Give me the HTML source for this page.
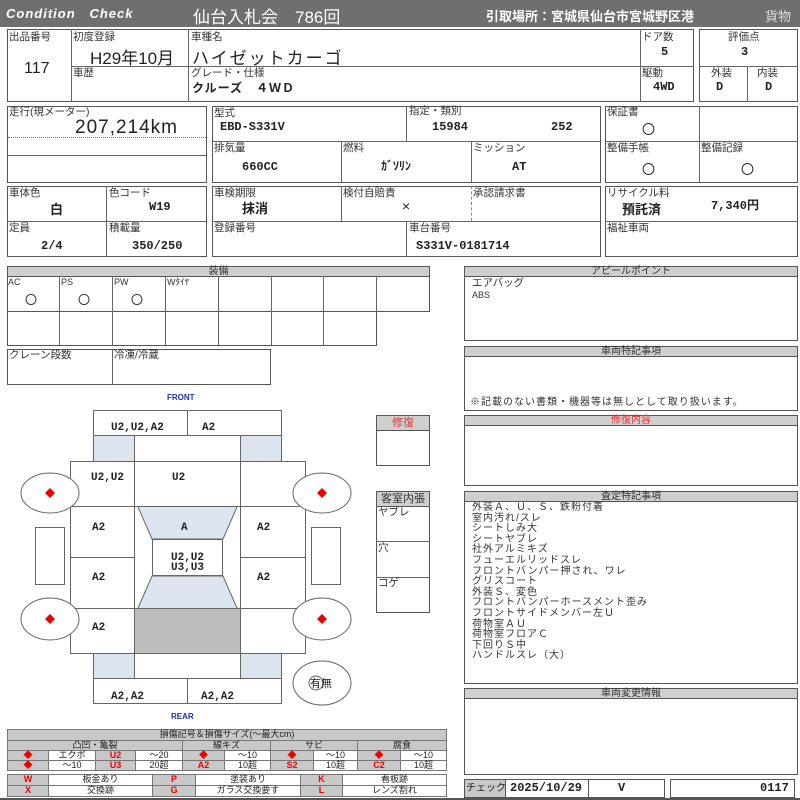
<!DOCTYPE html>
<html><head><meta charset="utf-8">
<style>
*{margin:0;padding:0;box-sizing:border-box}
body{width:800px;height:800px;background:#fff;position:relative;overflow:hidden;font-family:"Liberation Sans","Noto Sans CJK JP",sans-serif;color:#222}
.b{position:absolute;border:1px solid #555}
.l{position:absolute;background:#666}
.t{position:absolute;font-size:10.5px;white-space:nowrap;line-height:1;color:#333}
.v{position:absolute;font-size:12px;font-weight:bold;white-space:nowrap;line-height:1;font-family:"Liberation Mono","Noto Sans CJK JP",monospace}
.g{position:absolute;background:#cfcfcf;border:1px solid #555;font-size:10px;text-align:center;line-height:9px;color:#333;white-space:nowrap}
.lg{position:absolute;border:1px solid #777;font-size:9px;text-align:center;line-height:9px;color:#222;white-space:nowrap}
.gr{background:#c8c8c8}
.rd{color:#e00;font-weight:bold}
.d{position:absolute;font-size:12px;font-weight:bold;font-family:"Liberation Mono",monospace;line-height:1;white-space:nowrap}
</style></head><body>
<div style="position:absolute;left:0;top:0;width:800px;height:27px;background:#6f6f6f"></div>
<div style="position:absolute;left:6px;top:6px;color:#fff;font-style:italic;font-weight:bold;font-size:13px;letter-spacing:1px">Condition&nbsp;&nbsp;&nbsp;Check</div>
<div style="position:absolute;left:193px;top:3px;color:#fff;font-size:17px">仙台入札会　786回</div>
<div style="position:absolute;left:486px;top:6px;color:#fff;font-size:13px;font-weight:bold">引取場所：宮城県仙台市宮城野区港</div>
<div style="position:absolute;left:765px;top:6px;color:#ddd;font-size:13px">貨物</div>

<div class="b" style="left:7px;top:29px;width:687px;height:73px"></div>
<div class="l" style="left:71px;top:29px;width:1px;height:72px"></div>
<div class="l" style="left:188px;top:29px;width:1px;height:72px"></div>
<div class="l" style="left:640px;top:29px;width:1px;height:72px"></div>
<div class="l" style="left:71px;top:66px;width:622px;height:1px"></div>
<div class="t" style="left:9px;top:32px">出品番号</div>
<div style="position:absolute;left:24px;top:60px;font-size:16px">117</div>
<div class="t" style="left:73px;top:32px">初度登録</div>
<div style="position:absolute;left:90px;top:44px;font-size:17px">H29年10月</div>
<div class="t" style="left:73px;top:68px">車歴</div>
<div class="t" style="left:191px;top:32px">車種名</div>
<div style="position:absolute;left:192px;top:44px;font-size:17px;letter-spacing:2px">ハイゼットカーゴ</div>
<div class="t" style="left:191px;top:68px">グレード・仕様</div>
<div style="position:absolute;left:192px;top:79px;font-size:12px;font-weight:bold;letter-spacing:1px">クルーズ　４ＷＤ</div>
<div class="t" style="left:642px;top:32px">ドア数</div>
<div class="v" style="left:661px;top:46px">5</div>
<div class="t" style="left:642px;top:68px">駆動</div>
<div class="v" style="left:653px;top:81px">4WD</div>
<div class="b" style="left:699px;top:29px;width:99px;height:73px"></div>
<div class="l" style="left:699px;top:66px;width:98px;height:1px"></div>
<div class="l" style="left:747px;top:66px;width:1px;height:35px"></div>
<div class="t" style="left:728px;top:32px">評価点</div>
<div class="v" style="left:741px;top:46px">3</div>
<div class="t" style="left:711px;top:68px">外装</div>
<div class="t" style="left:757px;top:68px">内装</div>
<div class="v" style="left:716px;top:81px">D</div>
<div class="v" style="left:765px;top:81px">D</div>

<div class="b" style="left:7px;top:106px;width:200px;height:77px"></div>
<div style="position:absolute;left:8px;top:137px;width:198px;border-top:1px dotted #777"></div>
<div class="l" style="left:8px;top:155px;width:198px;height:1px"></div>
<div class="t" style="left:9px;top:107px">走行(現メーター)</div>
<div style="position:absolute;left:75px;top:117px;font-size:19px;letter-spacing:1px">207,214km</div>

<div class="b" style="left:212px;top:106px;width:389px;height:77px"></div>
<div class="l" style="left:212px;top:141px;width:388px;height:1px"></div>
<div class="l" style="left:406px;top:106px;width:1px;height:35px"></div>
<div class="l" style="left:341px;top:141px;width:1px;height:41px"></div>
<div class="l" style="left:471px;top:141px;width:1px;height:41px"></div>
<div class="t" style="left:214px;top:108px">型式</div>
<div class="v" style="left:220px;top:121px">EBD-S331V</div>
<div class="t" style="left:409px;top:106px">指定・類別</div>
<div class="v" style="left:432px;top:121px">15984</div>
<div class="v" style="left:551px;top:121px">252</div>
<div class="t" style="left:214px;top:143px">排気量</div>
<div class="v" style="left:242px;top:161px">660CC</div>
<div class="t" style="left:343px;top:143px">燃料</div>
<div class="v" style="left:381px;top:161px">ｶﾞｿﾘﾝ</div>
<div class="t" style="left:473px;top:143px">ミッション</div>
<div class="v" style="left:512px;top:161px">AT</div>

<div class="b" style="left:605px;top:106px;width:193px;height:77px"></div>
<div class="l" style="left:605px;top:141px;width:192px;height:1px"></div>
<div class="l" style="left:699px;top:106px;width:1px;height:76px"></div>
<div class="t" style="left:607px;top:107px">保証書</div>
<div style="position:absolute;left:642px;top:119px;font-size:13px">〇</div>
<div class="t" style="left:607px;top:143px">整備手帳</div>
<div style="position:absolute;left:642px;top:159px;font-size:13px">〇</div>
<div class="t" style="left:701px;top:143px">整備記録</div>
<div style="position:absolute;left:741px;top:159px;font-size:13px">〇</div>

<div class="b" style="left:7px;top:186px;width:200px;height:71px"></div>
<div class="l" style="left:7px;top:221px;width:199px;height:1px"></div>
<div class="l" style="left:106px;top:186px;width:1px;height:70px"></div>
<div class="t" style="left:9px;top:188px">車体色</div>
<div style="position:absolute;left:50px;top:199px;font-size:13px;font-weight:bold">白</div>
<div class="t" style="left:109px;top:188px">色コード</div>
<div class="v" style="left:149px;top:201px">W19</div>
<div class="t" style="left:9px;top:223px">定員</div>
<div class="v" style="left:41px;top:240px">2/4</div>
<div class="t" style="left:109px;top:223px">積載量</div>
<div class="v" style="left:132px;top:240px">350/250</div>

<div class="b" style="left:212px;top:186px;width:389px;height:71px"></div>
<div class="l" style="left:212px;top:221px;width:388px;height:1px"></div>
<div class="l" style="left:341px;top:186px;width:1px;height:35px"></div>
<div style="position:absolute;left:471px;top:186px;height:35px;border-left:1px dashed #888"></div>
<div class="l" style="left:406px;top:221px;width:1px;height:35px"></div>
<div class="t" style="left:214px;top:188px">車検期限</div>
<div style="position:absolute;left:242px;top:198px;font-size:13px;font-weight:bold">抹消</div>
<div class="t" style="left:343px;top:188px">検付自賠責</div>
<div style="position:absolute;left:402px;top:198px;font-size:14px">×</div>
<div class="t" style="left:473px;top:188px">承認請求書</div>
<div class="t" style="left:214px;top:223px">登録番号</div>
<div class="t" style="left:409px;top:223px">車台番号</div>
<div class="v" style="left:416px;top:240px">S331V-0181714</div>

<div class="b" style="left:605px;top:186px;width:193px;height:71px"></div>
<div class="l" style="left:605px;top:221px;width:192px;height:1px"></div>
<div class="t" style="left:607px;top:188px">リサイクル料</div>
<div style="position:absolute;left:622px;top:199px;font-size:13px;font-weight:bold">預託済</div>
<div class="v" style="left:711px;top:200px">7,340円</div>
<div class="t" style="left:607px;top:223px">福祉車両</div>

<div class="g" style="left:7px;top:266px;width:423px;height:11px">装備</div>
<div class="b" style="left:7px;top:276px;width:423px;height:36px"></div>
<div class="b" style="left:7px;top:311px;width:370px;height:35px"></div>
<div class="l" style="left:59px;top:276px;width:1px;height:69px"></div>
<div class="l" style="left:112px;top:276px;width:1px;height:69px"></div>
<div class="l" style="left:165px;top:276px;width:1px;height:69px"></div>
<div class="l" style="left:218px;top:276px;width:1px;height:69px"></div>
<div class="l" style="left:271px;top:276px;width:1px;height:69px"></div>
<div class="l" style="left:323px;top:276px;width:1px;height:69px"></div>
<div class="l" style="left:376px;top:276px;width:1px;height:35px"></div>
<div class="t" style="left:8px;top:278px;font-size:9px">AC</div>
<div class="t" style="left:61px;top:278px;font-size:9px">PS</div>
<div class="t" style="left:114px;top:278px;font-size:9px">PW</div>
<div class="t" style="left:167px;top:278px;font-size:9px">Wﾀｲﾔ</div>
<div style="position:absolute;left:25px;top:291px;font-size:12px">〇</div>
<div style="position:absolute;left:78px;top:291px;font-size:12px">〇</div>
<div style="position:absolute;left:131px;top:291px;font-size:12px">〇</div>

<div class="b" style="left:7px;top:349px;width:264px;height:36px"></div>
<div class="l" style="left:112px;top:349px;width:1px;height:35px"></div>
<div class="t" style="left:9px;top:350px">クレーン段数</div>
<div class="t" style="left:114px;top:350px">冷凍/冷蔵</div>
<div style="position:absolute;left:167px;top:393px;color:#2233aa;font-size:8px;font-weight:bold">FRONT</div>
<div style="position:absolute;left:171px;top:712px;color:#2233aa;font-size:8px;font-weight:bold">REAR</div>

<svg style="position:absolute;left:0;top:400px" width="440" height="320" viewBox="0 400 440 320">
<g fill="#dbe4ef"><rect x="93" y="435" width="41" height="26"/><rect x="240" y="435" width="41" height="26"/><rect x="93" y="653" width="41" height="25"/><rect x="240" y="653" width="41" height="25"/>
<polygon points="138,506 237,506 223,539 152,539"/><polygon points="152,576 223,576 237,608 138,608"/></g>
<rect x="134" y="608" width="106" height="45" fill="#bdbdbd"/>
<g fill="none" stroke="#666" stroke-width="1">
<rect x="93.5" y="410.5" width="188" height="25"/><line x1="187.5" y1="410" x2="187.5" y2="435"/>
<rect x="93.5" y="678.5" width="188" height="25"/><line x1="187.5" y1="678" x2="187.5" y2="704"/>
<line x1="93.5" y1="435" x2="93.5" y2="461"/><line x1="281.5" y1="435" x2="281.5" y2="461"/>
<line x1="93.5" y1="653" x2="93.5" y2="678"/><line x1="281.5" y1="653" x2="281.5" y2="678"/>
<rect x="70.5" y="461.5" width="235" height="192"/>
<line x1="134.5" y1="435" x2="134.5" y2="678"/><line x1="240.5" y1="435" x2="240.5" y2="678"/>
<line x1="70" y1="506.5" x2="306" y2="506.5"/><line x1="70" y1="608.5" x2="306" y2="608.5"/>
<line x1="70" y1="557.5" x2="134" y2="557.5"/><line x1="240" y1="557.5" x2="306" y2="557.5"/>
<polyline points="138,507 152,539 223,539 237,507"/><polyline points="138,608 152,576 223,576 237,608"/>
<rect x="152.5" y="539.5" width="70" height="36"/>
<rect x="35.5" y="527.5" width="29" height="57"/><rect x="311.5" y="527.5" width="29" height="57"/>
<g fill="#fff"><ellipse cx="50" cy="493" rx="29" ry="20"/><ellipse cx="50" cy="619" rx="29" ry="21"/><ellipse cx="322" cy="493" rx="29" ry="20"/><ellipse cx="322" cy="619" rx="29" ry="21"/><ellipse cx="322" cy="683" rx="29" ry="22"/></g>
<circle cx="316" cy="683" r="7"/>
</g>
<g fill="#e00"><polygon points="50,488 55,493 50,498 45,493"/><polygon points="50,614 55,619 50,624 45,619"/><polygon points="322,488 327,493 322,498 317,493"/><polygon points="322,614 327,619 322,624 317,619"/></g>
<g font-family="Liberation Mono,monospace" font-weight="bold" font-size="11" fill="#222">
<text x="111" y="430">U2,U2,A2</text><text x="202" y="430">A2</text>
<text x="91" y="480">U2,U2</text><text x="172" y="480">U2</text>
<text x="92" y="530">A2</text><text x="181" y="530">A</text><text x="257" y="530">A2</text>
<text x="171" y="560">U2,U2</text><text x="171" y="570">U3,U3</text>
<text x="92" y="580">A2</text><text x="257" y="580">A2</text>
<text x="92" y="630">A2</text>
<text x="111" y="699">A2,A2</text><text x="201" y="699">A2,A2</text>
</g>
<text x="310" y="687" font-size="11" font-family="Noto Sans CJK JP,sans-serif" fill="#222">有無</text>
</svg>

<div class="g" style="left:376px;top:415px;width:54px;height:16px;line-height:14px;color:#e33;font-size:11px">修復</div>
<div class="b" style="left:376px;top:430px;width:54px;height:36px"></div>
<div class="g" style="left:376px;top:491px;width:54px;height:16px;line-height:14px;font-size:11px">客室内張</div>
<div class="b" style="left:376px;top:506px;width:54px;height:107px"></div>
<div class="l" style="left:376px;top:541px;width:53px;height:1px"></div>
<div class="l" style="left:376px;top:577px;width:53px;height:1px"></div>
<div class="t" style="left:378px;top:507px">ヤブレ</div>
<div class="t" style="left:378px;top:543px">穴</div>
<div class="t" style="left:378px;top:578px">コゲ</div>

<div class="g" style="left:464px;top:266px;width:334px;height:11px">アピールポイント</div>
<div class="b" style="left:464px;top:276px;width:334px;height:65px"></div>
<div class="t" style="left:472px;top:278px">エアバッグ</div>
<div class="t" style="left:472px;top:291px;font-size:9px">ABS</div>
<div class="g" style="left:464px;top:346px;width:334px;height:11px">車両特記事項</div>
<div class="b" style="left:464px;top:356px;width:334px;height:55px"></div>
<div class="t" style="left:470px;top:398px;font-size:10px;letter-spacing:1px">※記載のない書類・機器等は無しとして取り扱います。</div>
<div class="g" style="left:464px;top:415px;width:334px;height:11px;color:#e33">修復内容</div>
<div class="b" style="left:464px;top:425px;width:334px;height:61px"></div>
<div class="g" style="left:464px;top:491px;width:334px;height:11px">査定特記事項</div>
<div class="b" style="left:464px;top:501px;width:334px;height:183px"></div>
<div class="t" style="left:472px;top:503px;line-height:10.6px;font-size:10px;letter-spacing:1px">外装Ａ、Ｕ、Ｓ、鉄粉付着<br>室内汚れ/スレ<br>シートしみ大<br>シートヤブレ<br>社外アルミキズ<br>フューエルリッドスレ<br>フロントバンパー押され、ワレ<br>グリスコート<br>外装Ｓ、変色<br>フロントバンパーホースメント歪み<br>フロントサイドメンバー左Ｕ<br>荷物室ＡＵ<br>荷物室フロアＣ<br>下回りＳ中<br>ハンドルスレ（大）</div>
<div class="g" style="left:464px;top:688px;width:334px;height:11px">車両変更情報</div>
<div class="b" style="left:464px;top:698px;width:334px;height:77px"></div>

<div class="b gr" style="left:464px;top:779px;width:42px;height:19px;font-size:10px;line-height:17px;padding-left:1px;white-space:nowrap;overflow:hidden">チェック</div>
<div class="b" style="left:505px;top:779px;width:84px;height:19px"></div>
<div class="b" style="left:588px;top:779px;width:77px;height:19px"></div>
<div class="d" style="left:510px;top:782px">2025/10/29</div>
<div class="d" style="left:618px;top:782px">V</div>
<div class="b" style="left:670px;top:779px;width:125px;height:19px"></div>
<div class="d" style="left:760px;top:782px">0117</div>

<div class="lg gr" style="left:7px;top:729px;width:440px;height:12px">損傷記号＆損傷サイズ(〜最大cm)</div>
<div class="lg gr" style="left:7px;top:740px;width:176px;height:11px">凸凹・亀裂</div>
<div class="lg gr" style="left:182px;top:740px;width:89px;height:11px">線キズ</div>
<div class="lg gr" style="left:270px;top:740px;width:88px;height:11px">サビ</div>
<div class="lg gr" style="left:357px;top:740px;width:90px;height:11px">腐食</div>

<div class="lg gr rd" style="left:7px;top:750px;width:42px;height:11px">◆</div>
<div class="lg" style="left:48px;top:750px;width:48px;height:11px">エクボ</div>
<div class="lg gr rd" style="left:95px;top:750px;width:41px;height:11px">U2</div>
<div class="lg" style="left:135px;top:750px;width:48px;height:11px">〜20</div>
<div class="lg gr rd" style="left:182px;top:750px;width:43px;height:11px">◆</div>
<div class="lg" style="left:224px;top:750px;width:47px;height:11px">〜10</div>
<div class="lg gr rd" style="left:270px;top:750px;width:44px;height:11px">◆</div>
<div class="lg" style="left:313px;top:750px;width:45px;height:11px">〜10</div>
<div class="lg gr rd" style="left:357px;top:750px;width:44px;height:11px">◆</div>
<div class="lg" style="left:400px;top:750px;width:47px;height:11px">〜10</div>

<div class="lg gr rd" style="left:7px;top:760px;width:42px;height:11px">◆</div>
<div class="lg" style="left:48px;top:760px;width:48px;height:11px">〜10</div>
<div class="lg gr rd" style="left:95px;top:760px;width:41px;height:11px">U3</div>
<div class="lg" style="left:135px;top:760px;width:48px;height:11px">20超</div>
<div class="lg gr rd" style="left:182px;top:760px;width:43px;height:11px">A2</div>
<div class="lg" style="left:224px;top:760px;width:47px;height:11px">10超</div>
<div class="lg gr rd" style="left:270px;top:760px;width:44px;height:11px">S2</div>
<div class="lg" style="left:313px;top:760px;width:45px;height:11px">10超</div>
<div class="lg gr rd" style="left:357px;top:760px;width:44px;height:11px">C2</div>
<div class="lg" style="left:400px;top:760px;width:47px;height:11px">10超</div>

<div class="lg gr rd" style="left:7px;top:774px;width:42px;height:12px">W</div>
<div class="lg" style="left:48px;top:774px;width:105px;height:12px">板金あり</div>
<div class="lg gr rd" style="left:152px;top:774px;width:44px;height:12px">P</div>
<div class="lg" style="left:195px;top:774px;width:106px;height:12px">塗装あり</div>
<div class="lg gr rd" style="left:300px;top:774px;width:43px;height:12px">K</div>
<div class="lg" style="left:342px;top:774px;width:105px;height:12px">看板跡</div>
<div class="lg gr rd" style="left:7px;top:785px;width:42px;height:12px">X</div>
<div class="lg" style="left:48px;top:785px;width:105px;height:12px">交換跡</div>
<div class="lg gr rd" style="left:152px;top:785px;width:44px;height:12px">G</div>
<div class="lg" style="left:195px;top:785px;width:106px;height:12px">ガラス交換要す</div>
<div class="lg gr rd" style="left:300px;top:785px;width:43px;height:12px">L</div>
<div class="lg" style="left:342px;top:785px;width:105px;height:12px">レンズ割れ</div>
<div class="l" style="left:0;top:798px;width:800px;height:2px;background:#555"></div>
</body></html>
